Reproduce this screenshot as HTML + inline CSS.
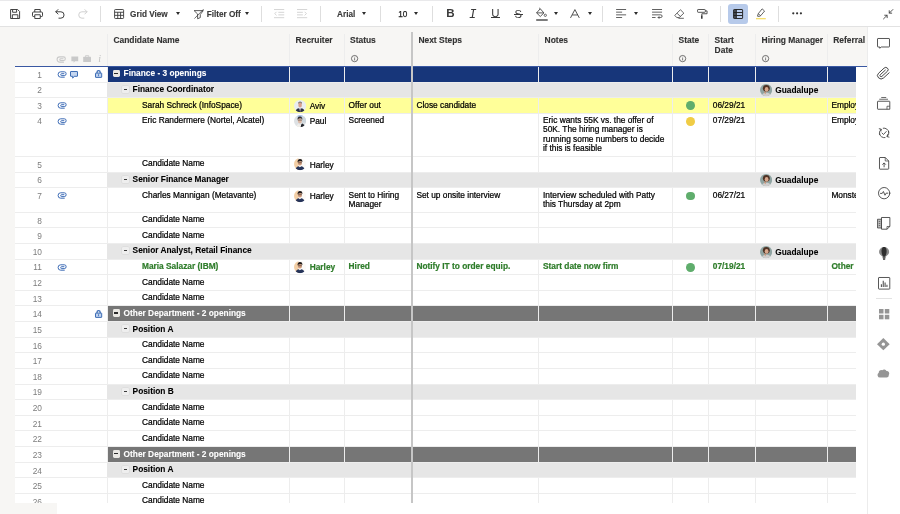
<!DOCTYPE html>
<html lang="en">
<head>
<meta charset="utf-8">
<title>Candidate Tracker</title>
<style>
*{box-sizing:border-box;margin:0;padding:0}
html,body{width:900px;height:514px;overflow:hidden;background:#fff}
body{position:relative;filter:blur(.35px);font-family:"Liberation Sans",Arial,sans-serif;font-size:8.33px;color:#111}
.abs{position:absolute}
#topstrip{position:absolute;left:0;top:0;width:900px;height:1px;background:#e9e9eb}
#toolbar{position:absolute;left:0;top:0;width:900px;height:27px;background:#fff;border-bottom:1px solid #e2e2e2}
#toolbar svg{position:absolute;overflow:visible}
.tdiv{position:absolute;top:6px;width:1px;height:16px;background:#dedede}
.tt{position:absolute;top:8.6px;font-weight:bold;font-size:8.2px;color:#383838;-webkit-text-stroke:.12px #383838;line-height:11px;white-space:nowrap}
.caret{position:absolute;top:12.1px;width:0;height:0;border-left:2.3px solid transparent;border-right:2.3px solid transparent;border-top:3.2px solid #2c2c2c}
#sheetbg{position:absolute;left:0;top:27px;width:867px;height:487px;background:#f7f6f4}
#gridbg{position:absolute;left:15px;top:67px;width:852px;height:436px;background:#fff}
#hscroll{position:absolute;left:57px;top:503px;width:810px;height:11px;background:#fff}
#blueline{position:absolute;left:15px;top:66px;width:852px;height:1px;background:#3a58a2;z-index:6}
#rpanel{position:absolute;left:867px;top:27px;width:33px;height:487px;background:#fff;border-left:1px solid #ececec}
#rpanel svg{position:absolute;overflow:visible}
.hd{position:absolute;top:36.4px;font-weight:bold;font-size:8.45px;color:#333;-webkit-text-stroke:.12px #333;line-height:9.4px;white-space:nowrap}
.vl{position:absolute;top:34px;width:1px;height:469px;background:#ededed;z-index:5}
#freeze{position:absolute;left:411px;top:32px;width:2px;height:471px;background:#c6c6c6;z-index:8}
.row{position:absolute;left:0;width:867px;border-bottom:1px solid #ededed}
.row .fill{position:absolute;left:107px;top:0;width:749px;height:100%;}
.row:after{content:"";position:absolute;left:0;bottom:-1px;width:15px;height:1px;background:#f7f6f4}
.row.top .fill{background:#767676}
.row.top.navy .fill{background:#17367a}
.row.pos .fill{background:#e6e6e6;z-index:6}
.row.pos .t,.row.pos .tog,.row.pos .ic{z-index:7}
.row.yellow .fill{background:#ffff99}
.row.top .t{color:#fff}
.row.green .t{color:#2f7d2b;font-weight:bold;-webkit-text-stroke:.2px #2f7d2b}
.num{position:absolute;left:15px;width:27px;text-align:right;font-size:8.33px;line-height:9.375px;color:#7d7d7d}
.t{position:absolute;line-height:9.375px;white-space:nowrap;color:#000;-webkit-text-stroke:.22px currentColor}
.t.b{font-weight:bold;-webkit-text-stroke:.08px currentColor}
.t.ref{width:24.6px;overflow:hidden}
.ic{position:absolute;overflow:visible}
.dot{position:absolute;left:686.2px;width:8.8px;height:8.8px;border-radius:50%}
.tog{position:absolute;width:6.6px;height:7px;background:#eeeeee;border-radius:1px;box-shadow:0 0 0 .5px #d6d6d6}
.tog i{position:absolute;left:1.7px;top:3px;width:3.2px;height:.9px;background:#3a3a3a}
.tog.big{width:7.4px;height:7.5px;background:#eae8e4;border-radius:1.4px;box-shadow:none}
.tog.big i{left:1.5px;top:3px;width:4.3px;height:1.4px;background:#2a2a2a}
#scrollwhite{position:absolute;left:856px;top:67px;width:11px;height:447px;background:#fff;z-index:9}
</style>
</head>
<body>
<div id="sheetbg"></div>
<div id="gridbg"></div>
<div id="hscroll"></div>

<!-- header -->
<div class="hd" style="left:113.4px">Candidate Name</div>
<div class="hd" style="left:295.6px">Recruiter</div>
<div class="hd" style="left:350px">Status</div>
<div class="hd" style="left:418.4px">Next Steps</div>
<div class="hd" style="left:544.6px">Notes</div>
<div class="hd" style="left:678.6px">State</div>
<div class="hd" style="left:714.6px">Start<br>Date</div>
<div class="hd" style="left:761.6px">Hiring Manager</div>
<div class="hd" style="left:833.2px;width:34.4px;overflow:hidden">Referral S</div>
<svg class="ic" style="left:350.6px;top:55.4px" width="7.2" height="7.2" viewBox="0 0 14.4 14.4" fill="none" stroke="#454545" stroke-width="1.500"><circle cx="7.200" cy="7.200" r="6.300"/><path d="M7.200 6.300 V10.800 M7.200 3.600 V5" stroke-width="1.400"/></svg>
<svg class="ic" style="left:679.2px;top:55.4px" width="7.2" height="7.2" viewBox="0 0 14.4 14.4" fill="none" stroke="#454545" stroke-width="1.500"><circle cx="7.200" cy="7.200" r="6.300"/><path d="M7.200 6.300 V10.800 M7.200 3.600 V5" stroke-width="1.400"/></svg>
<svg class="ic" style="left:761.8px;top:55.4px" width="7.2" height="7.2" viewBox="0 0 14.4 14.4" fill="none" stroke="#454545" stroke-width="1.500"><circle cx="7.200" cy="7.200" r="6.300"/><path d="M7.200 6.300 V10.800 M7.200 3.600 V5" stroke-width="1.400"/></svg>
<!-- header icons -->
<svg class="ic" style="left:57.4px;top:55.7px" width="9" height="6.8" viewBox="0 0 92 68"><path d="M66 62 H28 A26 26 0 0 1 28 8 H66 A18 18 0 0 1 66 46 H38 A9 9 0 0 1 38 27 H62" fill="none" stroke="#c9c9c9" stroke-width="11" stroke-linecap="round"/></svg>
<svg class="ic" style="left:70.7px;top:55.6px" width="7.6" height="7.6" viewBox="0 0 80 80"><path d="M4 4 H76 V54 H42 L28 72 V54 H4 Z" fill="#c9c9c9"/></svg>
<svg class="ic" style="left:82.8px;top:55.2px" width="8.2" height="7.4" viewBox="0 0 84 74"><path d="M26 18 V6 H58 V18" fill="none" stroke="#c9c9c9" stroke-width="9"/><rect x="2" y="16" width="80" height="56" rx="6" fill="#c9c9c9"/></svg>
<span class="abs" style="left:98.2px;top:53.2px;font-family:'Liberation Serif',serif;font-style:italic;font-size:10px;line-height:11px;color:#c2c2c2">i</span>

<div class="vl" style="left:107px"></div><div class="vl" style="left:289px"></div><div class="vl" style="left:344px"></div><div class="vl" style="left:538px"></div><div class="vl" style="left:672px"></div><div class="vl" style="left:708px"></div><div class="vl" style="left:755px"></div><div class="vl" style="left:827px"></div>
<div id="freeze"></div>
<div id="blueline"></div>

<div class="row top navy" style="top:67px;height:16px"><div class="fill"></div><span class="num" style="top:3.83px">1</span><svg class="ic" style="left:57.6px;top:4.0px" width="8.8" height="6.8" viewBox="0 0 92 68" preserveAspectRatio="none"><path d="M66 62 H28 A26 26 0 0 1 28 8 H66 A18 18 0 0 1 66 46 H38 A9 9 0 0 1 38 27 H62" fill="none" stroke="#3a69b4" stroke-width="10" stroke-linecap="round"/></svg><svg class="ic" style="left:70.2px;top:4.4px" width="8" height="7.8" viewBox="0 0 80 78"><path d="M8 5 H72 a3 3 0 0 1 3 3 V50 a3 3 0 0 1 -3 3 H42 L27 72 V53 H8 a3 3 0 0 1 -3 -3 V8 a3 3 0 0 1 3 -3z" fill="#c5d6ef" stroke="#3c6cb4" stroke-width="10" stroke-linejoin="round"/></svg><svg class="ic" style="left:95px;top:3.1px" width="7.2" height="7.9" viewBox="0 0 72 79"><path d="M20 32 V23 a16 16 0 0 1 32 0 V32" fill="none" stroke="#3c6cb4" stroke-width="13"/><rect x="5" y="31" width="62" height="43" rx="3" fill="#bfd2ef" stroke="#3c6cb4" stroke-width="10"/><rect x="32" y="42" width="8" height="20" fill="#3c6cb4"/></svg><span class="tog big" style="left:112.6px;top:2.60px"><i></i></span><span class="t b" style="top:1.83px;left:123.6px">Finance - 3 openings</span></div>
<div class="row pos" style="top:83px;height:15px"><div class="fill"></div><span class="num" style="top:2.83px">2</span><span class="tog" style="left:122.2px;top:2.53px"><i></i></span><span class="t b" style="top:1.83px;left:132.6px">Finance Coordinator</span><svg class="ic" style="left:759.5px;top:0.93px" width="12.2" height="12.2" viewBox="0 0 24 24"><defs><clipPath id="cp1"><circle cx="12" cy="12" r="12"/></clipPath></defs><g clip-path="url(#cp1)"><rect width="24" height="24" fill="#8fa4a2"/><ellipse cx="12.500" cy="8.600" rx="6.800" ry="6.600" fill="#4f3325"/><ellipse cx="13" cy="10.600" rx="3.700" ry="4.800" fill="#d9a78c"/><path d="M3 24 q1 -6 7 -7 h5 q6 1 7 7z" fill="#cfcdcc"/><path d="M7.500 14.500 q1 5.500 3.200 5.500 l1.300 -3.500z" fill="#c9957a"/></g></svg><span class="t b" style="top:2.83px;left:775.3px">Guadalupe</span></div>
<div class="row cand yellow" style="top:98px;height:16px"><div class="fill"></div><span class="num" style="top:3.83px">3</span><svg class="ic" style="left:57.6px;top:4.25px" width="8.8" height="6.8" viewBox="0 0 92 68" preserveAspectRatio="none"><path d="M66 62 H28 A26 26 0 0 1 28 8 H66 A18 18 0 0 1 66 46 H38 A9 9 0 0 1 38 27 H62" fill="none" stroke="#3a69b4" stroke-width="10" stroke-linecap="round"/></svg><span class="t" style="top:2.83px;left:142px">Sarah Schreck (InfoSpace)</span><svg class="ic" style="left:293.8px;top:1.55px" width="12.2" height="12.2" viewBox="0 0 24 24"><defs><clipPath id="cp2"><circle cx="12" cy="12" r="12"/></clipPath></defs><g clip-path="url(#cp2)"><rect width="24" height="24" fill="#e9edf1"/><path d="M8.6 4.500 q3.400 -3.400 6.800 0 l.2 3 h-7.200z" fill="#7d7a78"/><ellipse cx="12" cy="9.600" rx="3.500" ry="5" fill="#d8a08c"/><path d="M9 6.300 q3 -1.800 6 0 l0 -1.600 q-3 -2 -6 0z" fill="#8a8583"/><path d="M2.500 24 q.5 -6.500 6.500 -8 l3 2.500 l3 -2.500 q6 1.500 6.500 8z" fill="#2a3142"/><path d="M10.200 15.600 l1.800 8.400 l1.800 -8.400 l-1.800 1.200z" fill="#9db7dc"/><path d="M11.400 17 l.6 7 l.6 -7z" fill="#c4503f"/></g></svg><span class="t" style="top:3.83px;left:309.7px">Aviv</span><span class="t" style="top:2.83px;left:348.6px">Offer out</span><span class="t" style="top:2.83px;left:416.4px">Close candidate</span><span class="dot" style="top:3.35px;background:#5fad6c"></span><span class="t" style="top:2.83px;left:712.8px">06/29/21</span><span class="t ref" style="top:2.83px;left:831.4px">Employee</span></div>
<div class="row cand" style="top:114px;height:43px"><div class="fill"></div><span class="num" style="top:2.83px">4</span><svg class="ic" style="left:57.6px;top:3.88px" width="8.8" height="6.8" viewBox="0 0 92 68" preserveAspectRatio="none"><path d="M66 62 H28 A26 26 0 0 1 28 8 H66 A18 18 0 0 1 66 46 H38 A9 9 0 0 1 38 27 H62" fill="none" stroke="#3a69b4" stroke-width="10" stroke-linecap="round"/></svg><span class="t" style="top:1.83px;left:142px">Eric Randermere (Nortel, Alcatel)</span><svg class="ic" style="left:293.8px;top:1.18px" width="12.2" height="12.2" viewBox="0 0 24 24"><defs><clipPath id="cp3"><circle cx="12" cy="12" r="12"/></clipPath></defs><g clip-path="url(#cp3)"><rect width="24" height="24" fill="#dde1e4"/><rect x="7" y="0" width="10" height="5" fill="#a9c0e4"/><rect x="15" y="3" width="9" height="12" fill="#cdd6dc"/><ellipse cx="11.600" cy="10.800" rx="4.100" ry="5.300" fill="#dcb8a4"/><path d="M6.800 9.500 q-.2 -6.700 5 -6.700 q5 .2 4.600 6.500 q-1.600 -3 -4.600 -2.800 q-3.200 0 -5 3z" fill="#2f2b2b"/><path d="M7.600 10 h8" stroke="#3a3636" stroke-width="1.100" fill="none"/><path d="M4 24 q1 -5.500 5.500 -7 l2.500 2.500 l3 -2.500 q5.500 1 6.500 7z" fill="#f0eeea"/><path d="M14.200 18.500 q2 -2 3 -1.500 q4 1.500 4.800 7 h-9z" fill="#23262e"/></g></svg><span class="t" style="top:2.83px;left:309.7px">Paul</span><span class="t" style="top:1.83px;left:348.6px">Screened</span><span class="t" style="top:1.83px;left:543px">Eric wants 55K vs. the offer of<br>50K. The hiring manager is<br>running some numbers to decide<br>if this is feasible</span><span class="dot" style="top:2.98px;background:#f0cc45"></span><span class="t" style="top:1.83px;left:712.8px">07/29/21</span><span class="t ref" style="top:1.83px;left:831.4px">Employee</span></div>
<div class="row cand" style="top:157px;height:16px"><div class="fill"></div><span class="num" style="top:3.83px">5</span><span class="t" style="top:1.83px;left:142px">Candidate Name</span><svg class="ic" style="left:293.8px;top:1.48px" width="12.2" height="12.2" viewBox="0 0 24 24"><defs><clipPath id="cp4"><circle cx="12" cy="12" r="12"/></clipPath></defs><g clip-path="url(#cp4)"><rect width="24" height="24" fill="#fcfaf7"/><path d="M0 0 h9 q-2 12 1 24 h-10z" fill="#f3cfa6"/><ellipse cx="11.600" cy="9.800" rx="4" ry="5.200" fill="#cf9a7a"/><path d="M7 9 q-.5 -7.200 4.800 -7.200 q5.400 0 4.600 6.800 q-1.400 -2.800 -4.600 -2.700 q-3.200 0 -4.800 3.100z" fill="#1f1a19"/><path d="M8 9.300 h7.600" stroke="#2a2423" stroke-width="1" fill="none"/><path d="M2.500 24 q.5 -6.500 6.500 -8 l2.600 2 l3 -2 q6 1.500 7 8z" fill="#26345a"/></g></svg><span class="t" style="top:3.83px;left:309.7px">Harley</span></div>
<div class="row pos" style="top:173px;height:15px"><div class="fill"></div><span class="num" style="top:2.83px">6</span><span class="tog" style="left:122.2px;top:2.70px"><i></i></span><span class="t b" style="top:1.83px;left:132.6px">Senior Finance Manager</span><svg class="ic" style="left:759.5px;top:1.1px" width="12.2" height="12.2" viewBox="0 0 24 24"><defs><clipPath id="cp5"><circle cx="12" cy="12" r="12"/></clipPath></defs><g clip-path="url(#cp5)"><rect width="24" height="24" fill="#8fa4a2"/><ellipse cx="12.500" cy="8.600" rx="6.800" ry="6.600" fill="#4f3325"/><ellipse cx="13" cy="10.600" rx="3.700" ry="4.800" fill="#d9a78c"/><path d="M3 24 q1 -6 7 -7 h5 q6 1 7 7z" fill="#cfcdcc"/><path d="M7.500 14.500 q1 5.500 3.200 5.500 l1.300 -3.500z" fill="#c9957a"/></g></svg><span class="t b" style="top:2.83px;left:775.3px">Guadalupe</span></div>
<div class="row cand" style="top:188px;height:25px"><div class="fill"></div><span class="num" style="top:3.83px">7</span><svg class="ic" style="left:57.6px;top:4.42px" width="8.8" height="6.8" viewBox="0 0 92 68" preserveAspectRatio="none"><path d="M66 62 H28 A26 26 0 0 1 28 8 H66 A18 18 0 0 1 66 46 H38 A9 9 0 0 1 38 27 H62" fill="none" stroke="#3a69b4" stroke-width="10" stroke-linecap="round"/></svg><span class="t" style="top:2.83px;left:142px">Charles Mannigan (Metavante)</span><svg class="ic" style="left:293.8px;top:1.73px" width="12.2" height="12.2" viewBox="0 0 24 24"><defs><clipPath id="cp6"><circle cx="12" cy="12" r="12"/></clipPath></defs><g clip-path="url(#cp6)"><rect width="24" height="24" fill="#fcfaf7"/><path d="M0 0 h9 q-2 12 1 24 h-10z" fill="#f3cfa6"/><ellipse cx="11.600" cy="9.800" rx="4" ry="5.200" fill="#cf9a7a"/><path d="M7 9 q-.5 -7.200 4.800 -7.200 q5.400 0 4.600 6.800 q-1.400 -2.800 -4.600 -2.700 q-3.200 0 -4.800 3.100z" fill="#1f1a19"/><path d="M8 9.300 h7.600" stroke="#2a2423" stroke-width="1" fill="none"/><path d="M2.500 24 q.5 -6.500 6.500 -8 l2.600 2 l3 -2 q6 1.500 7 8z" fill="#26345a"/></g></svg><span class="t" style="top:3.83px;left:309.7px">Harley</span><span class="t" style="top:2.83px;left:348.6px">Sent to Hiring<br>Manager</span><span class="t" style="top:2.83px;left:416.4px">Set up onsite interview</span><span class="t" style="top:2.83px;left:543px">Interview scheduled with Patty<br>this Thursday at 2pm</span><span class="dot" style="top:3.52px;background:#5fad6c"></span><span class="t" style="top:2.83px;left:712.8px">06/27/21</span><span class="t ref" style="top:2.83px;left:831.4px">Monster</span></div>
<div class="row cand" style="top:213px;height:15px"><div class="fill"></div><span class="num" style="top:3.83px">8</span><span class="t" style="top:1.83px;left:142px">Candidate Name</span></div>
<div class="row cand" style="top:228px;height:16px"><div class="fill"></div><span class="num" style="top:3.83px">9</span><span class="t" style="top:2.83px;left:142px">Candidate Name</span></div>
<div class="row pos" style="top:244px;height:16px"><div class="fill"></div><span class="num" style="top:3.83px">10</span><span class="tog" style="left:122.2px;top:3.17px"><i></i></span><span class="t b" style="top:1.83px;left:132.6px">Senior Analyst, Retail Finance</span><svg class="ic" style="left:759.5px;top:1.57px" width="12.2" height="12.2" viewBox="0 0 24 24"><defs><clipPath id="cp7"><circle cx="12" cy="12" r="12"/></clipPath></defs><g clip-path="url(#cp7)"><rect width="24" height="24" fill="#8fa4a2"/><ellipse cx="12.500" cy="8.600" rx="6.800" ry="6.600" fill="#4f3325"/><ellipse cx="13" cy="10.600" rx="3.700" ry="4.800" fill="#d9a78c"/><path d="M3 24 q1 -6 7 -7 h5 q6 1 7 7z" fill="#cfcdcc"/><path d="M7.500 14.500 q1 5.500 3.200 5.500 l1.300 -3.500z" fill="#c9957a"/></g></svg><span class="t b" style="top:3.83px;left:775.3px">Guadalupe</span></div>
<div class="row cand green" style="top:260px;height:15px"><div class="fill"></div><span class="num" style="top:2.82px">11</span><svg class="ic" style="left:57.6px;top:3.9px" width="8.8" height="6.8" viewBox="0 0 92 68" preserveAspectRatio="none"><path d="M66 62 H28 A26 26 0 0 1 28 8 H66 A18 18 0 0 1 66 46 H38 A9 9 0 0 1 38 27 H62" fill="none" stroke="#3a69b4" stroke-width="10" stroke-linecap="round"/></svg><span class="t" style="top:1.82px;left:142px">Maria Salazar (IBM)</span><svg class="ic" style="left:293.8px;top:1.2px" width="12.2" height="12.2" viewBox="0 0 24 24"><defs><clipPath id="cp8"><circle cx="12" cy="12" r="12"/></clipPath></defs><g clip-path="url(#cp8)"><rect width="24" height="24" fill="#fcfaf7"/><path d="M0 0 h9 q-2 12 1 24 h-10z" fill="#f3cfa6"/><ellipse cx="11.600" cy="9.800" rx="4" ry="5.200" fill="#cf9a7a"/><path d="M7 9 q-.5 -7.200 4.800 -7.200 q5.400 0 4.600 6.800 q-1.400 -2.800 -4.600 -2.700 q-3.200 0 -4.800 3.100z" fill="#1f1a19"/><path d="M8 9.300 h7.600" stroke="#2a2423" stroke-width="1" fill="none"/><path d="M2.500 24 q.5 -6.500 6.500 -8 l2.600 2 l3 -2 q6 1.500 7 8z" fill="#26345a"/></g></svg><span class="t" style="top:2.82px;left:309.7px">Harley</span><span class="t" style="top:1.82px;left:348.6px">Hired</span><span class="t" style="top:1.82px;left:416.4px">Notify IT to order equip.</span><span class="t" style="top:1.82px;left:543px">Start date now firm</span><span class="dot" style="top:3.00px;background:#5fad6c"></span><span class="t" style="top:1.82px;left:712.8px">07/19/21</span><span class="t ref" style="top:1.82px;left:831.4px">Other T</span></div>
<div class="row cand" style="top:275px;height:16px"><div class="fill"></div><span class="num" style="top:3.82px">12</span><span class="t" style="top:2.82px;left:142px">Candidate Name</span></div>
<div class="row cand" style="top:291px;height:15px"><div class="fill"></div><span class="num" style="top:3.82px">13</span><span class="t" style="top:1.82px;left:142px">Candidate Name</span></div>
<div class="row top" style="top:306px;height:16px"><div class="fill"></div><span class="num" style="top:3.82px">14</span><svg class="ic" style="left:95px;top:3.88px" width="7.2" height="7.9" viewBox="0 0 72 79"><path d="M20 32 V23 a16 16 0 0 1 32 0 V32" fill="none" stroke="#3c6cb4" stroke-width="13"/><rect x="5" y="31" width="62" height="43" rx="3" fill="#bfd2ef" stroke="#3c6cb4" stroke-width="10"/><rect x="32" y="42" width="8" height="20" fill="#3c6cb4"/></svg><span class="tog big" style="left:112.6px;top:3.38px"><i></i></span><span class="t b" style="top:2.82px;left:123.6px">Other Department - 2 openings</span></div>
<div class="row pos" style="top:322px;height:16px"><div class="fill"></div><span class="num" style="top:3.82px">15</span><span class="tog" style="left:122.2px;top:3.30px"><i></i></span><span class="t b" style="top:2.82px;left:132.6px">Position A</span></div>
<div class="row cand" style="top:338px;height:15px"><div class="fill"></div><span class="num" style="top:3.82px">16</span><span class="t" style="top:1.82px;left:142px">Candidate Name</span></div>
<div class="row cand" style="top:353px;height:16px"><div class="fill"></div><span class="num" style="top:3.82px">17</span><span class="t" style="top:2.82px;left:142px">Candidate Name</span></div>
<div class="row cand" style="top:369px;height:16px"><div class="fill"></div><span class="num" style="top:3.82px">18</span><span class="t" style="top:1.82px;left:142px">Candidate Name</span></div>
<div class="row pos" style="top:385px;height:15px"><div class="fill"></div><span class="num" style="top:2.82px">19</span><span class="tog" style="left:122.2px;top:2.80px"><i></i></span><span class="t b" style="top:1.82px;left:132.6px">Position B</span></div>
<div class="row cand" style="top:400px;height:16px"><div class="fill"></div><span class="num" style="top:3.82px">20</span><span class="t" style="top:2.82px;left:142px">Candidate Name</span></div>
<div class="row cand" style="top:416px;height:15px"><div class="fill"></div><span class="num" style="top:3.82px">21</span><span class="t" style="top:1.82px;left:142px">Candidate Name</span></div>
<div class="row cand" style="top:431px;height:16px"><div class="fill"></div><span class="num" style="top:3.82px">22</span><span class="t" style="top:2.82px;left:142px">Candidate Name</span></div>
<div class="row top" style="top:447px;height:16px"><div class="fill"></div><span class="num" style="top:3.82px">23</span><span class="tog big" style="left:112.6px;top:3.00px"><i></i></span><span class="t b" style="top:2.82px;left:123.6px">Other Department - 2 openings</span></div>
<div class="row pos" style="top:463px;height:15px"><div class="fill"></div><span class="num" style="top:3.82px">24</span><span class="tog" style="left:122.2px;top:2.93px"><i></i></span><span class="t b" style="top:1.82px;left:132.6px">Position A</span></div>
<div class="row cand" style="top:478px;height:16px"><div class="fill"></div><span class="num" style="top:3.82px">25</span><span class="t" style="top:2.82px;left:142px">Candidate Name</span></div>
<div class="row cand" style="top:494px;height:16px"><div class="fill"></div><span class="num" style="top:3.82px">26</span><span class="t" style="top:1.82px;left:142px">Candidate Name</span></div>

<div id="scrollwhite"></div>
<div class="abs" style="left:856px;top:66px;width:11px;height:1px;background:#3a58a2;z-index:10"></div>
<div class="abs" style="left:15px;top:503px;width:852px;height:11px;background:#fff;z-index:11"></div>
<div class="abs" style="left:0;top:503px;width:57px;height:11px;background:#f7f6f4;z-index:12"></div>

<!-- toolbar -->
<div id="toolbar">
<!-- save -->
<svg style="left:9.8px;top:9px" width="10.2" height="10" viewBox="0 0 20 20" fill="none" stroke="#3a3a3a" stroke-width="1.9" stroke-linejoin="round"><path d="M1 1 H15 L19 5 V19 H1 Z"/><path d="M5 1 V6.5 H13 V1"/><path d="M4.5 19 V11.5 H15.500 V19"/></svg>
<!-- print -->
<svg style="left:32px;top:9px" width="11" height="10" viewBox="0 0 22 20" fill="none" stroke="#3a3a3a" stroke-width="1.9" stroke-linejoin="round"><path d="M5.500 6 V1 H16.500 V6"/><path d="M5.500 15 H2.500 a1.500 1.500 0 0 1 -1.500 -1.500 V8 a2 2 0 0 1 2 -2 H19 a2 2 0 0 1 2 2 V13.500 a1.500 1.500 0 0 1 -1.500 1.500 H16.500"/><path d="M5.500 11.500 H16.500 V19 H5.500 Z"/></svg>
<!-- undo -->
<svg style="left:55.4px;top:9px" width="9.8" height="10" viewBox="0 0 20 20" fill="none" stroke="#3a3a3a" stroke-width="2" stroke-linecap="round" stroke-linejoin="round"><path d="M6 1 L1.500 5.500 L6 10"/><path d="M2 5.500 H12 a6.500 6.500 0 0 1 0 13 H8"/></svg>
<!-- redo -->
<svg style="left:77.6px;top:9px" width="9.8" height="10" viewBox="0 0 20 20" fill="none" stroke="#cfcfcf" stroke-width="2" stroke-linecap="round" stroke-linejoin="round"><path d="M14 1 L18.500 5.500 L14 10"/><path d="M18 5.500 H8 a6.500 6.500 0 0 0 0 13 H12"/></svg>
<div class="tdiv" style="left:100.2px"></div>
<!-- grid -->
<svg style="left:113.9px;top:9px" width="10.2" height="10" viewBox="0 0 20 20" fill="none" stroke="#3a3a3a" stroke-width="1.8"><rect x="1" y="1" width="18" height="18" rx="1.500"/><path d="M1 6.500 H19 M1 12.700 H19 M7.300 6.500 V19 M13 6.500 V19"/></svg>
<span class="tt" style="left:130.1px">Grid View</span>
<div class="caret" style="left:175.6px"></div>
<!-- filter -->
<svg style="left:193.8px;top:8.6px" width="9.8" height="10.4" viewBox="0 0 20 21" fill="none" stroke="#3a3a3a" stroke-width="1.700" stroke-linejoin="round" stroke-linecap="round"><path d="M1 3.200 H19 L12.800 11 V17.500 L7.400 19.800 V11 Z"/><path d="M19 0.800 L1.500 18.800" stroke-width="1.500"/></svg>
<span class="tt" style="left:206.7px">Filter Off</span>
<div class="caret" style="left:244.7px"></div>
<div class="tdiv" style="left:260.8px"></div>
<!-- outdent -->
<svg style="left:274.3px;top:9px" width="10.2" height="9.2" viewBox="0 0 20 18" fill="none" stroke="#cbcbcb" stroke-width="1.6"><path d="M0 1 H20 M0 17 H20 M8.500 6.500 H20 M8.500 11.500 H20 M5 5.500 L1.500 9 L5 12.500"/></svg>
<!-- indent -->
<svg style="left:296.8px;top:9px" width="10.2" height="9.2" viewBox="0 0 20 18" fill="none" stroke="#cbcbcb" stroke-width="1.6"><path d="M0 1 H20 M0 17 H20 M0 6.500 H11.500 M0 11.500 H11.500 M15 5.500 L18.500 9 L15 12.500"/></svg>
<div class="tdiv" style="left:319.6px"></div>
<span class="tt" style="left:337.1px">Arial</span>
<div class="caret" style="left:362.3px"></div>
<div class="tdiv" style="left:379.9px"></div>
<span class="tt" style="left:398.2px;font-weight:normal;color:#222;-webkit-text-stroke:.25px #222">10</span>
<div class="caret" style="left:414.3px"></div>
<div class="tdiv" style="left:431.9px"></div>
<span class="abs" style="left:446.2px;top:6.1px;font-weight:bold;font-size:11.6px;line-height:14px;color:#3a3a3a">B</span>
<span class="abs" style="left:469.1px;top:8.1px;font-family:'Liberation Mono',monospace;font-style:italic;font-size:12.6px;line-height:14px;color:#3a3a3a">I</span>
<!-- U -->
<span class="abs" style="left:491.3px;top:5.9px;font-size:11.4px;line-height:14px;color:#3a3a3a">U</span>
<div class="abs" style="left:491.4px;top:17.2px;width:8.2px;height:1px;background:#3a3a3a"></div>
<!-- S -->
<span class="abs" style="left:514.6px;top:6.8px;font-size:11.2px;line-height:14px;color:#3a3a3a">S</span>
<div class="abs" style="left:513.6px;top:13.6px;width:9.4px;height:1px;background:#3a3a3a"></div>
<!-- fill bucket -->
<svg style="left:535.6px;top:8.2px" width="12" height="13" viewBox="0 0 24 26" fill="none" stroke="#3a3a3a" stroke-width="1.700" stroke-linejoin="round"><path d="M8.500 1.500 L15.800 9.800 L8.500 17 L1.200 9.800 Z"/><path d="M1.200 9.800 H15.800"/><path d="M8.500 1.500 L6.500 0"/><circle cx="18.600" cy="14.600" r="2.300" stroke-width="1.500"/><path d="M0.400 24 H23.400" stroke="#4a4a4a" stroke-width="2.900"/></svg>
<div class="caret" style="left:554.1px"></div>
<!-- A -->
<svg style="left:569.8px;top:9px" width="9.8" height="9" viewBox="0 0 20 18" fill="none" stroke="#3a3a3a" stroke-width="1.8" stroke-linejoin="round"><path d="M1 18 L10 1 L19 18 M4.500 12 H15.500"/></svg>
<div class="caret" style="left:587.6px"></div>
<div class="tdiv" style="left:602.2px"></div>
<!-- align -->
<svg style="left:615.6px;top:9.4px" width="10.2" height="9" viewBox="0 0 20 18" fill="none" stroke="#3a3a3a" stroke-width="1.600"><path d="M0 1 H20 M0 6.300 H12 M0 11.700 H20 M0 17 H12"/></svg>
<div class="caret" style="left:634.2px"></div>
<!-- wrap -->
<svg style="left:651.7px;top:9.4px" width="10.6" height="9" viewBox="0 0 21 18" fill="none" stroke="#3a3a3a" stroke-width="1.600" stroke-linejoin="round"><path d="M0 1 H20 M0 6.300 H20 M0 11.700 H17.500 a2.500 2.500 0 0 1 0 5.300 H12 M0 17 H7 M14.500 14.500 L12 17 L14.500 19.500"/></svg>
<!-- eraser -->
<svg style="left:674.4px;top:9px" width="10.4" height="9.8" viewBox="0 0 21 20" fill="none" stroke="#3a3a3a" stroke-width="1.600" stroke-linejoin="round"><path d="M13 1.500 L20 8.500 L10.500 17.500 H5.500 L1.500 13 Z"/><path d="M6 8.500 L13 15.500"/><path d="M9 19 H20"/></svg>
<!-- roller -->
<svg style="left:696.8px;top:9px" width="10.6" height="10" viewBox="0 0 21 20" fill="none" stroke="#3a3a3a" stroke-width="1.700" stroke-linejoin="round"><rect x="1" y="1" width="15.500" height="5.600" rx="1.200"/><path d="M16.500 3.800 H20 V9.500 H9.500 V12.500"/><rect x="7.900" y="12.500" width="3.200" height="7" rx=".6" fill="#3a3a3a" stroke="none"/></svg>
<div class="tdiv" style="left:719.5px"></div>
<div class="abs" style="left:728px;top:4px;width:20px;height:20px;border-radius:3px;background:#b7caea"></div>
<svg style="left:733.1px;top:9px" width="10.2" height="10" viewBox="0 0 20 20" fill="none" stroke="#222" stroke-width="1.900"><rect x="1" y="1" width="18" height="18" rx="1"/><path d="M1 7 H19 M1 13 H19 M6.500 1 V19"/><path d="M1.500 2 H6 V18 H1.500Z" fill="#222" stroke="none" opacity=".75"/></svg>
<!-- highlighter -->
<svg style="left:756px;top:8px" width="9.8" height="12" viewBox="0 0 20 24" fill="none" stroke="#3a3a3a" stroke-width="1.600" stroke-linejoin="round"><path d="M12.500 1.500 L17.500 6 L9.500 15.500 L4.500 11.500 Z"/><path d="M4.500 11.500 L3 16.500 L6.500 17 L9.500 15.500"/><path d="M0 21.500 H20" stroke="#f5de6e" stroke-width="2.800"/></svg>
<div class="tdiv" style="left:778.1px"></div>
<svg style="left:792.1px;top:12.4px" width="10.2" height="2.600" viewBox="0 0 20 5"><circle cx="2.500" cy="2.500" r="2.200" fill="#333"/><circle cx="10" cy="2.500" r="2.200" fill="#333"/><circle cx="17.500" cy="2.500" r="2.200" fill="#333"/></svg>
<!-- collapse -->
<svg style="left:883px;top:8.8px" width="10.4" height="10.4" viewBox="0 0 20 20" fill="none" stroke="#333" stroke-width="1.600"><path d="M19.500 .5 L12 8 M12 2.500 V8 H17.500 M.5 19.500 L8 12 M2.500 12 H8 V17.500"/></svg>
</div>
<div id="topstrip"></div>

<!-- right panel -->
<div id="rpanel">
<!-- comment -->
<svg style="left:9.1px;top:10.9px" width="13" height="10.6" viewBox="0 0 26 21.2" fill="none" stroke="#3a3a3a" stroke-width="1.700" stroke-linejoin="round"><path d="M2 1 H24 a1 1 0 0 1 1 1 V17 a1 1 0 0 1 -1 1 H8.500 L5.500 20.500 V18 H2 a1 1 0 0 1 -1 -1 V2 a1 1 0 0 1 1 -1z"/></svg>
<!-- attachment -->
<svg style="left:9.1px;top:40.1px" width="13.300" height="12.300" viewBox="1.100 0.500 22.300 22.300" preserveAspectRatio="none" fill="none" stroke="#3a3a3a" stroke-width="1.650" stroke-linecap="round" stroke-linejoin="round"><path d="M21.440 11.050l-9.190 9.190a6 6 0 0 1-8.490-8.490l9.190-9.190a4 4 0 0 1 5.660 5.660l-9.200 9.190a2 2 0 0 1-2.830-2.830l8.490-8.480"/></svg>
<!-- proofs / layers -->
<svg style="left:9.1px;top:70px" width="13.300" height="12.800" viewBox="0 0 26.6 25.6" fill="none" stroke="#3a3a3a" stroke-width="1.700" stroke-linejoin="round"><path d="M8.500 1 H18.500 M4.500 4.500 H22" stroke-width="1.500"/><path d="M2 8.500 H24.600 a1 1 0 0 1 1 1 V24.500 H2 a1 1 0 0 1 -1 -1 V9.500 a1 1 0 0 1 1 -1z"/><path d="M25.500 18.500 H20 V24.500" stroke-width="1.400"/></svg>
<!-- update requests -->
<svg style="left:9.6px;top:99.9px" width="12.300" height="11.800" viewBox="0 0 24.6 23.6" fill="none" stroke="#3a3a3a" stroke-width="1.700" stroke-linecap="round" stroke-linejoin="round"><path d="M3.200 15 a9.500 9.500 0 0 1 3 -10.500 M10.500 2.300 a9.500 9.500 0 0 1 11.200 8 M21.400 9 a9.500 9.500 0 0 1 -3 10.200 M14 21.300 a9.500 9.500 0 0 1 -11 -7.300"/><path d="M2.500 3.500 L6.500 4.300 L5.800 8.300 M22 20.200 L18.200 19.300 L19 15.300"/><path d="M8 12 L11 15 L16.500 9"/></svg>
<!-- publish -->
<svg style="left:10.9px;top:130px" width="10.200" height="12.700" viewBox="0 0 20.4 25.4" fill="none" stroke="#3a3a3a" stroke-width="1.700" stroke-linejoin="round"><path d="M2 1 H12.500 L19.400 8 V23.400 a1 1 0 0 1 -1 1 H2 a1 1 0 0 1 -1 -1 V2 a1 1 0 0 1 1 -1z"/><path d="M12.500 1 V8 H19.400" stroke-width="1.400"/><path d="M10.200 20.500 V12 M6.700 15.300 L10.200 11.800 L13.700 15.300"/></svg>
<!-- activity -->
<svg style="left:9.6px;top:160.2px" width="12.300" height="12.300" viewBox="0 0 24.6 24.6" fill="none" stroke="#3a3a3a" stroke-width="1.700" stroke-linejoin="round" stroke-linecap="round"><circle cx="12.300" cy="12.300" r="11.300"/><path d="M5 12.800 H8.500 L10.800 9 L14 16.500 L16.300 12.300 H19.600"/></svg>
<!-- summary -->
<svg style="left:8.8px;top:189.9px" width="13.400" height="12.700" viewBox="0 0 26.8 25.4" fill="none" stroke="#3a3a3a" stroke-width="1.700" stroke-linejoin="round"><path d="M9 1 H25.800 V19 L20 24.400 H9 Z"/><path d="M25.800 19 H20 V24.400" stroke-width="1.400"/><path d="M1 4.500 H9 V22 H1 Z" fill="#b9b9b9" stroke-width="1.500"/><path d="M3.500 9 H6.500 M3.500 13 H6.500 M3.500 17 H6.500" stroke-width="1.200"/></svg>
<!-- balloon -->
<svg style="left:10.9px;top:219.7px" width="10.200" height="12.700" viewBox="0 0 20.4 25.4" stroke="none"><path d="M10.200 0 a10.200 9.800 0 0 1 10.200 9.800 c0 4.200 -4.500 7 -7 9.700 h-6.400 c-2.500 -2.700 -7 -5.500 -7 -9.700 a10.200 9.800 0 0 1 10.200 -9.800z" fill="#8a8a8a"/><path d="M10.200 0 c4.500 0 5.400 5.500 5 9.800 c-.4 4.200 -1.800 7 -3 9.700 h-4 c-1.200 -2.700 -2.600 -5.500 -3 -9.700 c-.4 -4.300 .5 -9.800 5 -9.800z" fill="#2f2f2f"/><path d="M7.200 20.300 h6 v2 h-6z M8 23 h4.400 v2.400 h-4.400z" fill="#2f2f2f"/></svg>
<!-- chart -->
<svg style="left:9.6px;top:249.8px" width="12.300" height="12.600" viewBox="0 0 24.6 25.2" fill="none" stroke="#3a3a3a" stroke-width="1.700" stroke-linejoin="round"><rect x="1" y="1" width="22.600" height="23.200" rx="1"/><path d="M6.800 19.800 V14.500 M10.500 19.800 V7.500 M14.200 19.800 V11 M17.900 19.800 V15.500" stroke="#555" stroke-width="2.200"/></svg>
<div class="abs" style="left:7.8px;top:271px;width:16px;height:1px;background:#e2e2e2"></div>
<!-- 4 squares -->
<svg style="left:10.7px;top:281.9px" width="10.300" height="10.300" viewBox="0 0 20.6 20.6" fill="#959595"><rect x="0" y="0" width="9" height="9"/><rect x="11.600" y="0" width="9" height="9"/><rect x="0" y="11.600" width="9" height="9"/><rect x="11.600" y="11.600" width="9" height="9"/></svg>
<!-- diamond -->
<svg style="left:9.3px;top:310.7px" width="12.700" height="12.300" viewBox="0 0 25.4 24.6" fill="#959595"><path d="M12.700 0 L25.400 12.300 L12.700 24.600 L0 12.300 Z"/><circle cx="12.700" cy="12.300" r="3.300" fill="#fff"/></svg>
<!-- cloud -->
<svg style="left:9.3px;top:342.4px" width="12.700" height="8.700" viewBox="0 0 25.4 17.4" fill="#959595"><path d="M6 17 a5 5 0 0 1 -2.500 -9.300 a5 5 0 0 1 7 -5.200 a5.500 5.500 0 0 1 8.500 1.500 a5 5 0 0 1 4.500 8 a4.500 4.500 0 0 1 -4.500 5 z"/></svg>
</div>
</body>
</html>
